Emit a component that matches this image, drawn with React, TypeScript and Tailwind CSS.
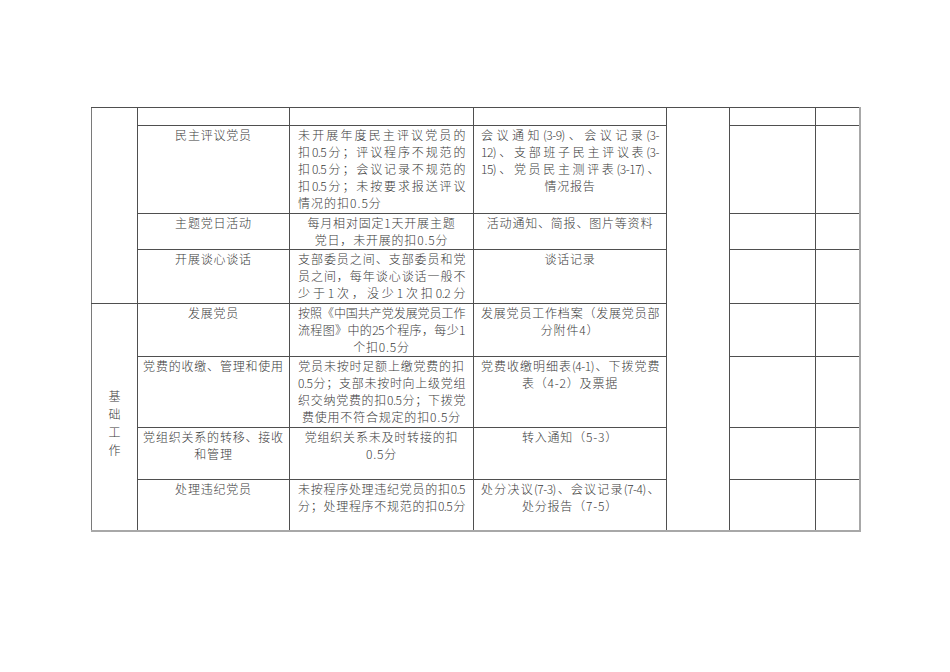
import React from 'react';

type Line = { t: string; j?: boolean; l?: boolean };
type Row = {
  h: string;
  item: Line[];
  rule: Line[];
  docs: Line[];
};

const c = (t: string): Line => ({ t });
const j = (t: string): Line => ({ t, j: true });
const l = (t: string): Line => ({ t, l: true });

// 上半部分（接上页）
const topRows: Row[] = [
  { h: 'h-[18px]', item: [], rule: [], docs: [] },
  {
    h: 'h-[88px]',
    item: [c('民主评议党员')],
    rule: [
      j('未开展年度民主评议党员的'),
      j('扣0.5分；评议程序不规范的'),
      j('扣0.5分；会议记录不规范的'),
      j('扣0.5分；未按要求报送评议'),
      l('情况的扣0.5分'),
    ],
    docs: [
      j('会议通知(3-9)、会议记录(3-'),
      j('12)、支部班子民主评议表(3-'),
      j('15)、党员民主测评表(3-17)、'),
      c('情况报告'),
    ],
  },
  {
    h: 'h-[36px]',
    item: [c('主题党日活动')],
    rule: [c('每月相对固定1天开展主题'), c('党日，未开展的扣0.5分')],
    docs: [c('活动通知、简报、图片等资料')],
  },
  {
    h: 'h-[54px]',
    item: [c('开展谈心谈话')],
    rule: [
      j('支部委员之间、支部委员和党'),
      j('员之间，每年谈心谈话一般不'),
      j('少于1次，没少1次扣0.2分'),
    ],
    docs: [c('谈话记录')],
  },
];

// 基础工作
const baseRows: Row[] = [
  {
    h: 'h-[53px]',
    item: [c('发展党员')],
    rule: [
      j('按照《中国共产党发展党员工作'),
      j('流程图》中的25个程序，每少1'),
      c('个扣0.5分'),
    ],
    docs: [j('发展党员工作档案（发展党员部'), c('分附件4）')],
  },
  {
    h: 'h-[71px]',
    item: [c('党费的收缴、管理和使用')],
    rule: [
      c('党员未按时足额上缴党费的扣'),
      j('0.5分；支部未按时向上级党组'),
      j('织交纳党费的扣0.5分；下拨党'),
      c('费使用不符合规定的扣0.5分'),
    ],
    docs: [j('党费收缴明细表(4-1)、下拨党费'), c('表（4-2）及票据')],
  },
  {
    h: 'h-[52px]',
    item: [c('党组织关系的转移、接收'), c('和管理')],
    rule: [c('党组织关系未及时转接的扣'), c('0.5分')],
    docs: [c('转入通知（5-3）')],
  },
  {
    h: 'h-[51px]',
    item: [c('处理违纪党员')],
    rule: [j('未按程序处理违纪党员的扣0.5'), j('分；处理程序不规范的扣0.5分')],
    docs: [j('处分决议(7-3)、会议记录(7-4)、'), c('处分报告（7-5）')],
  },
];

const cell = 'border border-[#4f4f4f] p-0';

function Lines({ lines }: { lines: Line[] }) {
  return (
    <>
      {lines.map((ln, i) => (
        <div
          key={i}
          className={
            ln.j
              ? 'tracking-[-0.5px] text-justify [text-align-last:justify]'
              : ln.l
                ? 'text-left tracking-[1px]'
                : 'whitespace-nowrap text-center tracking-[0.8px]'
          }
        >
          {ln.t}
        </div>
      ))}
    </>
  );
}

function TableRow({ row, first, last, lead }: { row: Row; first?: boolean; last?: boolean; lead?: React.ReactNode }) {
  const bottom = last ? 'border-b-2 border-b-[#a8a8a8]' : '';
  return (
    <tr className={row.h}>
      {lead}
      <td className={`${cell} ${bottom} align-top`}>
        <Lines lines={row.item} />
      </td>
      <td className={`${cell} ${bottom} px-2 align-top`}>
        <Lines lines={row.rule} />
      </td>
      <td className={`${cell} ${bottom} px-[7px] align-top`}>
        <Lines lines={row.docs} />
      </td>
      {first && <td rowSpan={8} className={`${cell} border-b-2 border-b-[#a8a8a8]`} />}
      <td className={`${cell} ${bottom}`} />
      <td className={`${cell} ${bottom} border-r-2 border-r-[#a8a8a8]`} />
    </tr>
  );
}

export default function App() {
  return (
    <div className="min-h-[672px] w-[950px] bg-white pt-[107px] pl-[91px]">
      <table className="w-[768px] table-fixed border-collapse font-['Noto_Sans_CJK_SC','Noto_Sans',sans-serif] text-[12px] leading-[17px] font-light text-[#3a3a3a]">
        <colgroup>
          <col className="w-[46px]" />
          <col className="w-[152px]" />
          <col className="w-[184px]" />
          <col className="w-[193px]" />
          <col className="w-[63px]" />
          <col className="w-[86px]" />
          <col className="w-[44px]" />
        </colgroup>
        <tbody>
          {topRows.map((row, i) => (
            <TableRow
              key={`t${i}`}
              row={row}
              first={i === 0}
              lead={i === 0 ? <td rowSpan={4} className={`${cell} border-l-[#7a7a7a]`} /> : undefined}
            />
          ))}
          {baseRows.map((row, i) => (
            <TableRow
              key={`b${i}`}
              row={row}
              last={i === baseRows.length - 1}
              lead={
                i === 0 ? (
                  <td
                    rowSpan={4}
                    className={`${cell} border-l-[#7a7a7a] border-b-2 border-b-[#a8a8a8] pt-3 align-middle`}
                  >
                    <div className="flex flex-col items-center leading-[18px]">
                      <span>基</span>
                      <span>础</span>
                      <span>工</span>
                      <span>作</span>
                    </div>
                  </td>
                ) : undefined
              }
            />
          ))}
        </tbody>
      </table>
    </div>
  );
}
